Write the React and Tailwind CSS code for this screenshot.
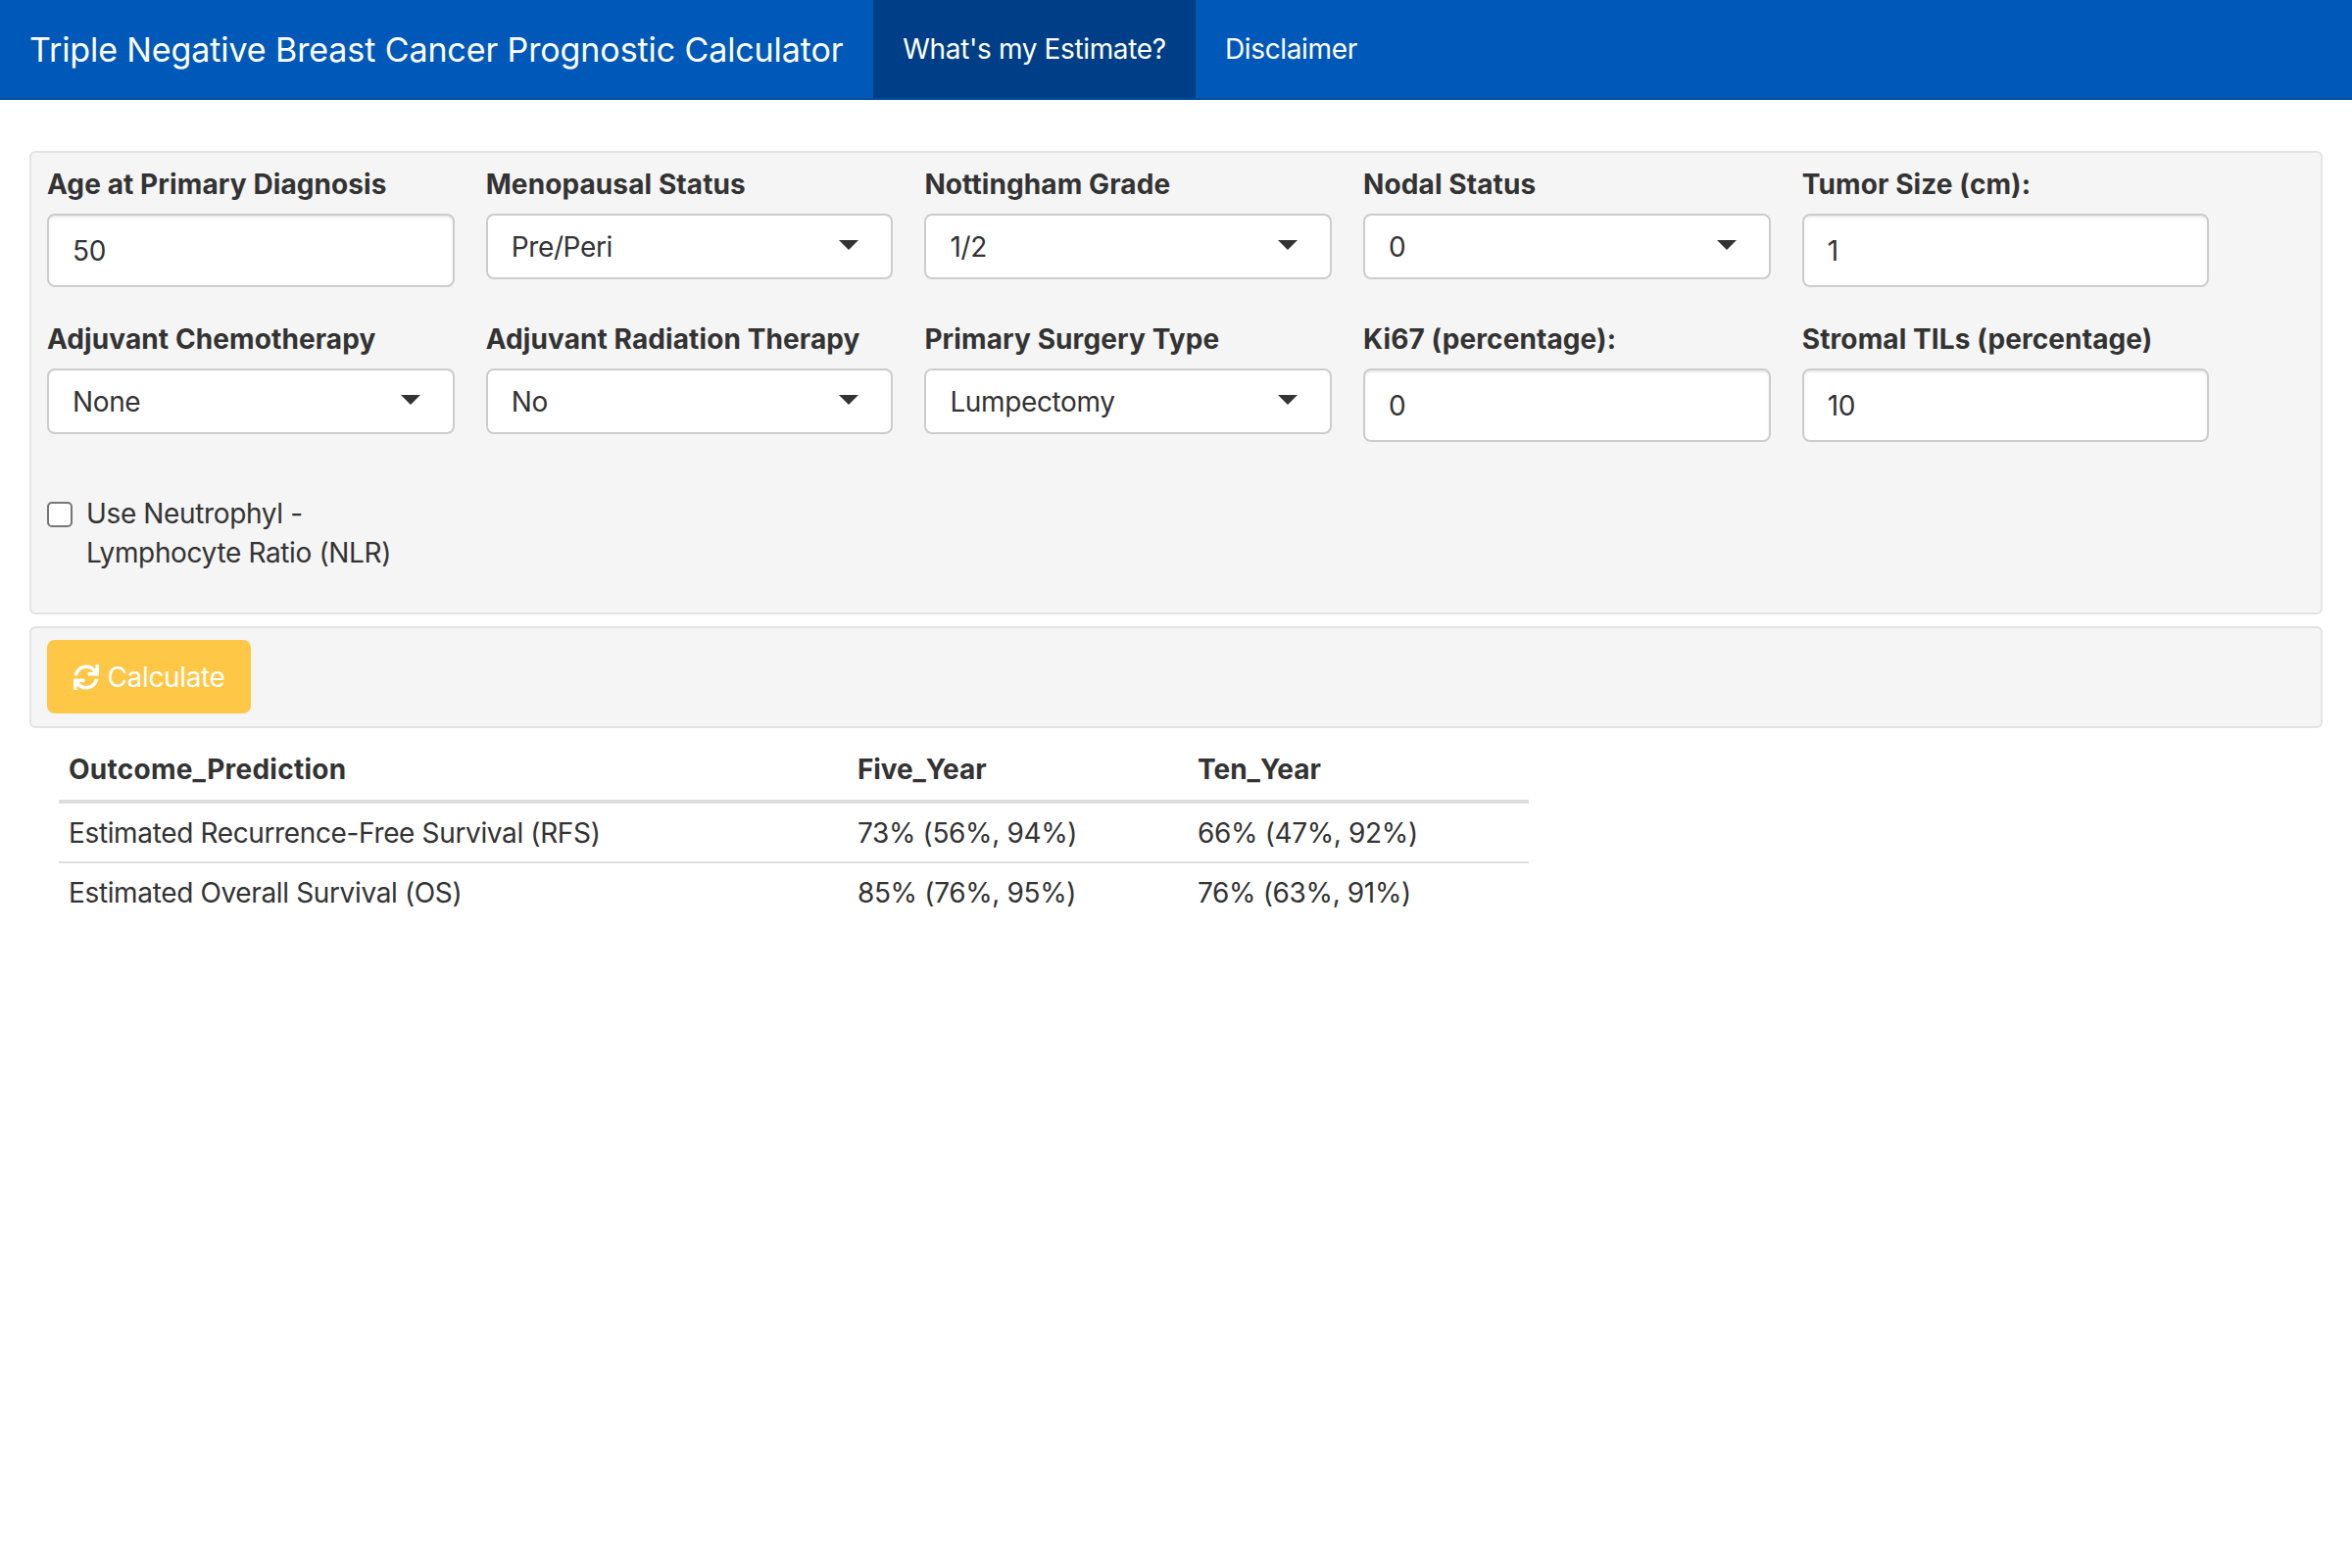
import React from "react";
import { FaSync } from "react-icons/fa";

const Label = ({ children }) => (
  <label className="block h-[42px] text-[28px] leading-[40px] font-bold tracking-[0.1px] text-[#333333] whitespace-nowrap">{children}</label>
);

const NumberField = ({ label, value }) => (
  <div>
    <Label>{label}</Label>
    <div className="mt-[8px] h-[75px] rounded-[8px] border-2 border-[#cccccc] bg-white pl-[24px] flex items-center text-[28px] text-[#333333] shadow-[inset_0_2px_2px_rgba(0,0,0,0.075)]">
      {value}
    </div>
  </div>
);

const SelectField = ({ label, value }) => (
  <div>
    <Label>{label}</Label>
    <div className="mt-[8px] h-[67px] rounded-[8px] border-2 border-[#cccccc] bg-white pl-[24px] pr-[33px] flex items-center justify-between text-[28px] text-[#333333]">
      <span>{value}</span>
      <span className="mb-[4px] w-0 h-0 border-x-[10px] border-x-transparent border-t-[10px] border-t-[#333333]"></span>
    </div>
  </div>
);

const rows = [
  ["Estimated Recurrence-Free Survival (RFS)", "73% (56%, 94%)", "66% (47%, 92%)"],
  ["Estimated Overall Survival (OS)", "85% (76%, 95%)", "76% (63%, 91%)"],
];

export default function App() {
  return (
    <div className="min-h-[1600px] bg-white text-[#333333] font-['Inter','Liberation_Sans',sans-serif] text-[28px] tracking-[-0.36px]">
      <nav className="flex h-[102px] bg-[#0059b8] border-b-2 border-[#004c9d] text-white">
        <div className="pl-[30px] pr-[30px] w-[891px] h-[100px] flex items-center text-[34px] tracking-[-0.1px] whitespace-nowrap">
          Triple Negative Breast Cancer Prognostic Calculator
        </div>
        <div className="w-[329px] h-[100px] bg-[#003f87] flex items-center justify-center">What's my Estimate?</div>
        <div className="pl-[30px] h-[100px] flex items-center">Disclaimer</div>
      </nav>

      <div className="px-[30px] pt-[52px]">
        <div className="h-[473px] rounded-[6px] border-2 border-[#e3e3e3] bg-[#f5f5f5] pl-[16px] pt-[12px]">
          <div className="grid grid-cols-[repeat(5,415.5px)] gap-x-[32.2px]">
            <div className="h-[158px]"><NumberField label="Age at Primary Diagnosis" value="50" /></div>
            <SelectField label="Menopausal Status" value="Pre/Peri" />
            <SelectField label="Nottingham Grade" value="1/2" />
            <SelectField label="Nodal Status" value="0" />
            <NumberField label="Tumor Size (cm):" value="1" />
            <SelectField label="Adjuvant Chemotherapy" value="None" />
            <SelectField label="Adjuvant Radiation Therapy" value="No" />
            <SelectField label="Primary Surgery Type" value="Lumpectomy" />
            <NumberField label="Ki67 (percentage):" value="0" />
            <NumberField label="Stromal TILs (percentage)" value="10" />
          </div>
          <div className="mt-[53px] flex leading-[40px] text-[#333333]">
            <span className="mt-[8px] w-[26px] h-[26px] shrink-0 rounded-[5px] border-2 border-[#767676] bg-white"></span>
            <span className="ml-[14px]">Use Neutrophyl -<br />Lymphocyte Ratio (NLR)</span>
          </div>
        </div>

        <div className="mt-[12px] h-[104px] rounded-[6px] border-2 border-[#e3e3e3] bg-[#f5f5f5] pl-[16px] pt-[12px]">
          <button className="h-[75px] w-[208px] rounded-[8px] bg-[#ffc745] text-white flex items-center justify-center gap-[9px]">
            <FaSync className="w-[26px] h-[26px]" />
            <span>Calculate</span>
          </button>
        </div>

        <table className="ml-[30px] mt-[10px] w-[1500px] table-fixed border-collapse text-left">
          <thead>
            <tr className="h-[65px] border-b-4 border-[#dddddd]">
              <th className="w-[805px] pl-[10px] font-bold tracking-[0.25px]">Outcome_Prediction</th>
              <th className="w-[347px] pl-[10px] font-bold tracking-[-0.1px]">Five_Year</th>
              <th className="pl-[10px] font-bold tracking-[0px]">Ten_Year</th>
            </tr>
          </thead>
          <tbody>
            {rows.map((r, i) => (
              <tr key={r[0]} className={i === 0 ? "h-[62px] border-b-2 border-[#dddddd]" : "h-[60px]"}>
                {r.map((c) => (
                  <td key={c} className="pl-[10px]">{c}</td>
                ))}
              </tr>
            ))}
          </tbody>
        </table>
      </div>
    </div>
  );
}
